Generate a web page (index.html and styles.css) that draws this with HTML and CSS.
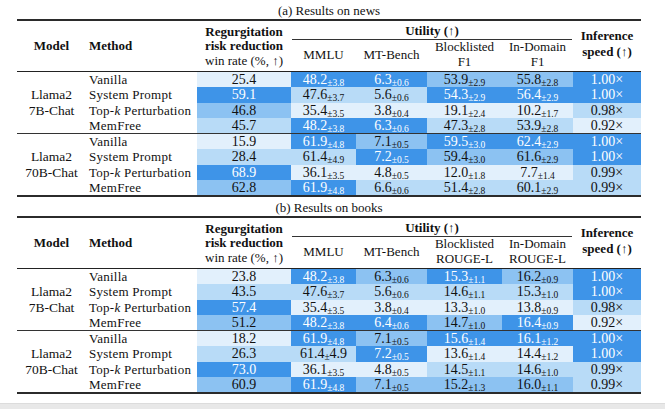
FILE: index.html
```html
<!DOCTYPE html>
<html>
<head>
<meta charset="utf-8">
<link rel="stylesheet" href="styles.css">
</head>
<body>
<div class="page">
  <div class="caption">(a) Results on news</div>
  <div class="tbl">
    <table>
      <colgroup>
        <col class="c-model"><col class="c-method"><col class="c-reg"><col class="c-mmlu"><col class="c-mt"><col class="c-block"><col class="c-indom"><col class="c-inf">
      </colgroup>
      <thead>
        <tr class="h1">
          <th rowspan="2" class="b hb">Model</th>
          <th rowspan="2" class="b hb left">Method</th>
          <th rowspan="2" class="hb reg"><b>Regurgitation</b><br><b>risk reduction</b><br>win rate (%, ↑)</th>
          <th colspan="4" class="b util">Utility (↑)</th>
          <th rowspan="2" class="b hb inf">Inference<br>speed (↑)</th>
        </tr>
        <tr class="h2">
          <th class="hb sub">MMLU</th>
          <th class="hb sub">MT-Bench</th>
          <th class="hb sub two">Blocklisted<br>F1</th>
          <th class="hb sub two">In-Domain<br>F1</th>
        </tr>
      </thead>
      <tbody>
        <tr>
          <td rowspan="4" class="model">Llama2<br>7B-Chat</td>
          <td class="method">Vanilla</td>
          <td class="v">25.4</td>
          <td class="d">48.2<sub>±3.8</sub></td>
          <td class="d">6.3<sub>±0.6</sub></td>
          <td class="m">53.9<sub>±2.9</sub></td>
          <td class="m">55.8<sub>±2.8</sub></td>
          <td class="d">1.00×</td>
        </tr>
        <tr>
          <td class="method">System Prompt</td>
          <td class="d">59.1</td>
          <td class="l">47.6<sub>±3.7</sub></td>
          <td class="l">5.6<sub>±0.6</sub></td>
          <td class="d">54.3<sub>±2.9</sub></td>
          <td class="d">56.4<sub>±2.9</sub></td>
          <td class="d">1.00×</td>
        </tr>
        <tr>
          <td class="method">Top-<i>k</i> Perturbation</td>
          <td class="m">46.8</td>
          <td class="v">35.4<sub>±3.5</sub></td>
          <td class="v">3.8<sub>±0.4</sub></td>
          <td class="v">19.1<sub>±2.4</sub></td>
          <td class="v">10.2<sub>±1.7</sub></td>
          <td class="l">0.98×</td>
        </tr>
        <tr>
          <td class="method">MemFree</td>
          <td class="l">45.7</td>
          <td class="d">48.2<sub>±3.8</sub></td>
          <td class="d">6.3<sub>±0.6</sub></td>
          <td class="l">47.3<sub>±2.8</sub></td>
          <td class="l">53.9<sub>±2.8</sub></td>
          <td class="v">0.92×</td>
        </tr>
        <tr class="grp">
          <td rowspan="4" class="model">Llama2<br>70B-Chat</td>
          <td class="method">Vanilla</td>
          <td class="v">15.9</td>
          <td class="d">61.9<sub>±4.8</sub></td>
          <td class="m">7.1<sub>±0.5</sub></td>
          <td class="d">59.5<sub>±3.0</sub></td>
          <td class="d">62.4<sub>±2.9</sub></td>
          <td class="d">1.00×</td>
        </tr>
        <tr>
          <td class="method">System Prompt</td>
          <td class="l">28.4</td>
          <td class="l">61.4<sub>±4.9</sub></td>
          <td class="d">7.2<sub>±0.5</sub></td>
          <td class="m">59.4<sub>±3.0</sub></td>
          <td class="m">61.6<sub>±2.9</sub></td>
          <td class="d">1.00×</td>
        </tr>
        <tr>
          <td class="method">Top-<i>k</i> Perturbation</td>
          <td class="d">68.9</td>
          <td class="v">36.1<sub>±3.5</sub></td>
          <td class="v">4.8<sub>±0.5</sub></td>
          <td class="v">12.0<sub>±1.8</sub></td>
          <td class="v">7.7<sub>±1.4</sub></td>
          <td class="l">0.99×</td>
        </tr>
        <tr>
          <td class="method">MemFree</td>
          <td class="m">62.8</td>
          <td class="d">61.9<sub>±4.8</sub></td>
          <td class="l">6.6<sub>±0.6</sub></td>
          <td class="l">51.4<sub>±2.8</sub></td>
          <td class="l">60.1<sub>±2.9</sub></td>
          <td class="l">0.99×</td>
        </tr>
      </tbody>
    </table>
  </div>

  <div class="caption">(b) Results on books</div>
  <div class="tbl">
    <table>
      <colgroup>
        <col class="c-model"><col class="c-method"><col class="c-reg"><col class="c-mmlu"><col class="c-mt"><col class="c-block"><col class="c-indom"><col class="c-inf">
      </colgroup>
      <thead>
        <tr class="h1">
          <th rowspan="2" class="b hb">Model</th>
          <th rowspan="2" class="b hb left">Method</th>
          <th rowspan="2" class="hb reg"><b>Regurgitation</b><br><b>risk reduction</b><br>win rate (%, ↑)</th>
          <th colspan="4" class="b util">Utility (↑)</th>
          <th rowspan="2" class="b hb inf">Inference<br>speed (↑)</th>
        </tr>
        <tr class="h2">
          <th class="hb sub">MMLU</th>
          <th class="hb sub">MT-Bench</th>
          <th class="hb sub two">Blocklisted<br>ROUGE-L</th>
          <th class="hb sub two">In-Domain<br>ROUGE-L</th>
        </tr>
      </thead>
      <tbody>
        <tr>
          <td rowspan="4" class="model">Llama2<br>7B-Chat</td>
          <td class="method">Vanilla</td>
          <td class="v">23.8</td>
          <td class="d">48.2<sub>±3.8</sub></td>
          <td class="m">6.3<sub>±0.6</sub></td>
          <td class="d">15.3<sub>±1.1</sub></td>
          <td class="m">16.2<sub>±0.9</sub></td>
          <td class="d">1.00×</td>
        </tr>
        <tr>
          <td class="method">System Prompt</td>
          <td class="l">43.5</td>
          <td class="l">47.6<sub>±3.7</sub></td>
          <td class="l">5.6<sub>±0.6</sub></td>
          <td class="l">14.6<sub>±1.1</sub></td>
          <td class="l">15.3<sub>±1.0</sub></td>
          <td class="d">1.00×</td>
        </tr>
        <tr>
          <td class="method">Top-<i>k</i> Perturbation</td>
          <td class="d">57.4</td>
          <td class="v">35.4<sub>±3.5</sub></td>
          <td class="v">3.8<sub>±0.4</sub></td>
          <td class="v">13.3<sub>±1.0</sub></td>
          <td class="v">13.8<sub>±0.9</sub></td>
          <td class="l">0.98×</td>
        </tr>
        <tr>
          <td class="method">MemFree</td>
          <td class="m">51.2</td>
          <td class="d">48.2<sub>±3.8</sub></td>
          <td class="d">6.4<sub>±0.6</sub></td>
          <td class="m">14.7<sub>±1.0</sub></td>
          <td class="d">16.4<sub>±0.9</sub></td>
          <td class="v">0.92×</td>
        </tr>
        <tr class="grp">
          <td rowspan="4" class="model">Llama2<br>70B-Chat</td>
          <td class="method">Vanilla</td>
          <td class="v">18.2</td>
          <td class="d">61.9<sub>±4.8</sub></td>
          <td class="m">7.1<sub>±0.5</sub></td>
          <td class="d">15.6<sub>±1.4</sub></td>
          <td class="d">16.1<sub>±1.2</sub></td>
          <td class="d">1.00×</td>
        </tr>
        <tr>
          <td class="method">System Prompt</td>
          <td class="l">26.3</td>
          <td class="l">61.4<sub>±</sub>4.9</td>
          <td class="d">7.2<sub>±0.5</sub></td>
          <td class="v">13.6<sub>±1.4</sub></td>
          <td class="v">14.4<sub>±1.2</sub></td>
          <td class="d">1.00×</td>
        </tr>
        <tr>
          <td class="method">Top-<i>k</i> Perturbation</td>
          <td class="d">73.0</td>
          <td class="v">36.1<sub>±3.5</sub></td>
          <td class="v">4.8<sub>±0.5</sub></td>
          <td class="l">14.5<sub>±1.1</sub></td>
          <td class="l">14.6<sub>±1.0</sub></td>
          <td class="l">0.99×</td>
        </tr>
        <tr>
          <td class="method">MemFree</td>
          <td class="m">60.9</td>
          <td class="d">61.9<sub>±4.8</sub></td>
          <td class="m">7.1<sub>±0.5</sub></td>
          <td class="m">15.2<sub>±1.3</sub></td>
          <td class="m">16.0<sub>±1.1</sub></td>
          <td class="l">0.99×</td>
        </tr>
      </tbody>
    </table>
  </div>
  <div class="footer"></div>
</div>
</body>
</html>
```

FILE: styles.css
```css
html, body {
  margin: 0;
  padding: 0;
  background: #ffffff;
}

body {
  font-family: "Liberation Serif", "Times New Roman", serif;
  color: #111111;
  width: 665px;
  height: 409px;
  overflow: hidden;
}

.page {
  display: flex;
  flex-direction: column;
  height: 409px;
}

.caption {
  width: 624px;
  margin-left: 17px;
  height: 19px;
  line-height: 19px;
  padding-top: 1px;
  box-sizing: border-box;
  text-align: center;
  font-size: 13px;
}

.tbl {
  width: 624px;
  margin-left: 17px;
  border-top: 2px solid #2b2b2b;
  border-bottom: 2px solid #2b2b2b;
}

table {
  width: 624px;
  table-layout: fixed;
  border-collapse: separate;
  border-spacing: 0;
}

.c-model { width: 69px; }
.c-method { width: 111px; }
.c-reg { width: 94px; }
.c-mmlu { width: 65px; }
.c-mt { width: 71px; }
.c-block { width: 75px; }
.c-indom { width: 71px; }
.c-inf { width: 68px; }

th {
  font-size: 13px;
  font-weight: normal;
  padding: 0;
  text-align: center;
  vertical-align: middle;
  line-height: 14.5px;
}

th.b, th b {
  font-weight: bold;
}

th.left {
  text-align: left;
  padding-left: 3px;
}

th.hb {
  border-bottom: 1px solid #222222;
}

.h1 { height: 19px; }
.h2 { height: 30px; }

th.reg {
  padding-top: 1px;
}

th.util {
  vertical-align: bottom;
  padding-bottom: 2px;
  background: linear-gradient(#333333, #333333) no-repeat center bottom / calc(100% - 2px) 1px;
}

th.inf {
  line-height: 16px;
  padding-bottom: 4px;
}

th.sub {
  padding-top: 0;
}

th.two {
  padding-bottom: 2px;
}

td {
  height: 15.25px;
  padding: 0;
  line-height: 15px;
  font-size: 14px;
  text-align: center;
  vertical-align: middle;
  white-space: nowrap;
}

td sub {
  font-size: 9.5px;
  line-height: 0;
  vertical-align: -2px;
}

td.model {
  font-size: 13.5px;
  line-height: 16px;
  background: #ffffff;
}

td.method {
  text-align: left;
  padding-left: 3px;
  font-size: 13px;
  letter-spacing: 0.25px;
}

tr.grp td {
  border-top: 1px solid #333333;
}

td.d { background: #3e94e8; color: #ffffff; }
td.m { background: #8cc2f2; }
td.l { background: #b8dbf7; }
td.v { background: #e2f0fc; }

.footer {
  margin-top: auto;
  height: 5px;
  background: #e8e8e8;
  border-top: 1px solid #dcdcdc;
}
```
